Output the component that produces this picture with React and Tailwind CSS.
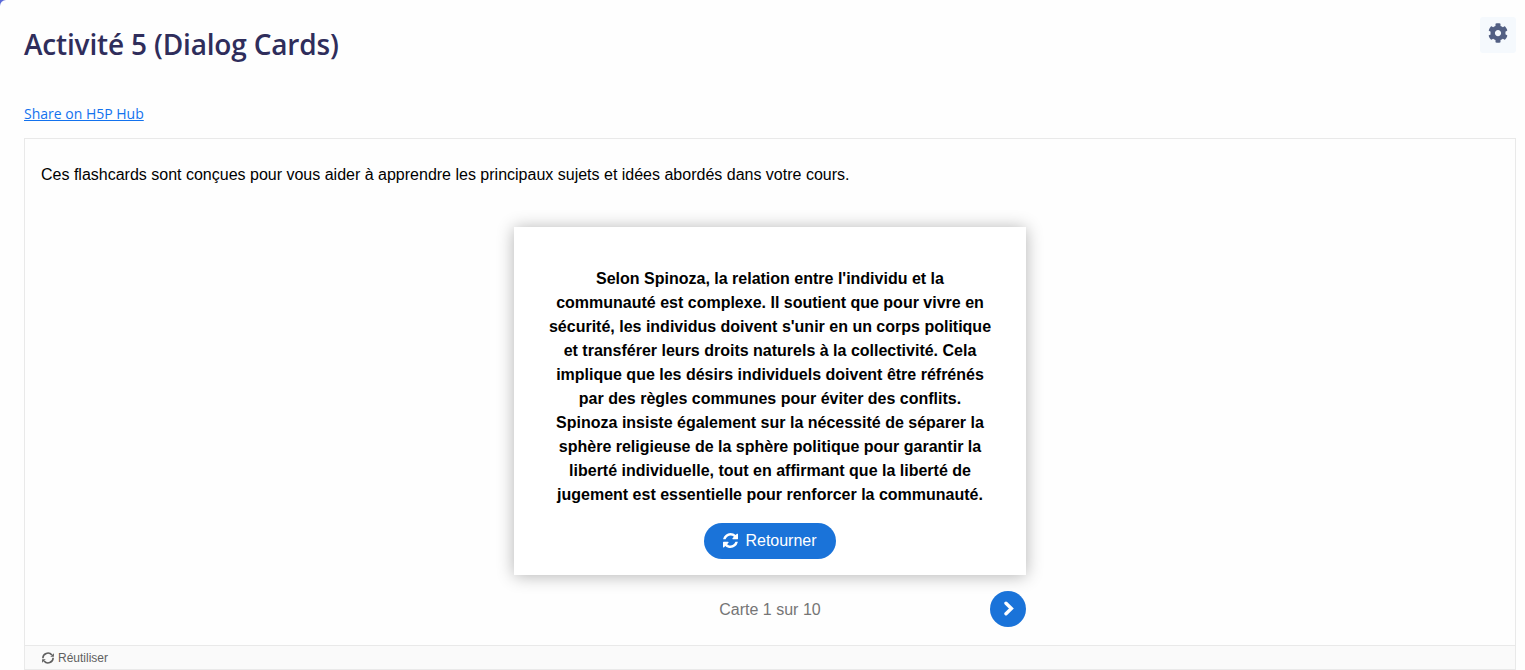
import React from "react";
import { FaCog } from "react-icons/fa";

function RefreshIcon({ className }) {
  return (
    <svg viewBox="0 0 1536 1536" fill="currentColor" className={className} aria-hidden="true">
      <path d="M1511 928q0 5-1 7-64 268-268 434.500t-478 166.500q-146 0-282.500-55t-243.500-157l-129 129q-19 19-45 19t-45-19-19-45v-448q0-26 19-45t45-19h448q26 0 45 19t19 45-19 45l-137 137q71 66 161 102t187 36q134 0 250-65t186-179q11-17 53-117 8-23 30-23h192q13 0 22.500 9.500t9.500 22.500zm25-800v448q0 26-19 45t-45 19h-448q-26 0-45-19t-19-45 19-45l138-138q-148-137-349-137-134 0-250 65t-186 179q-11 17-53 117-8 23-30 23h-199q-13 0-22.500-9.500t-9.500-22.500v-7q65-268 270-434.500t480-166.500q146 0 284 55.500t245 156.500l130-129q19-19 45-19t45 19 19 45z" />
    </svg>
  );
}

function ReuseIcon({ className }) {
  return (
    <svg viewBox="0 0 12 12" fill="none" stroke="currentColor" strokeWidth="1.600" className={className} aria-hidden="true">
      <path d="M.9 6.300A5 5 0 0 1 9.900 3.100M11.100 5.700A5 5 0 0 1 2.100 8.900" />
      <path d="M11.900 1.200v3.600H8.300zM.1 10.800V7.200h3.600z" fill="currentColor" stroke="none" />
    </svg>
  );
}

const lines = [
  "Selon Spinoza, la relation entre l'individu et la",
  "communauté est complexe. Il soutient que pour vivre en",
  "sécurité, les individus doivent s'unir en un corps politique",
  "et transférer leurs droits naturels à la collectivité. Cela",
  "implique que les désirs individuels doivent être réfrénés",
  "par des règles communes pour éviter des conflits.",
  "Spinoza insiste également sur la nécessité de séparer la",
  "sphère religieuse de la sphère politique pour garantir la",
  "liberté individuelle, tout en affirmant que la liberté de",
  "jugement est essentielle pour renforcer la communauté.",
];

export default function App() {
  return (
    <div className="h-[670px] overflow-hidden bg-[#5b6ad8]">
      <main className="h-full rounded-tl-[6px] bg-[#fefefe] pl-6 pr-[9px] pt-[17px] font-['Open_Sans',sans-serif]">
        <header className="flex h-[85px] items-start justify-between">
          <h1 className="pt-[9px] text-[28px] font-semibold leading-9 tracking-[-0.17px] text-[#2f2d5b]">Activité 5 (Dialog Cards)</h1>
          <button aria-label="Paramètres" className="flex size-9 items-center justify-center rounded-[3px] bg-[#f5f9fd] pb-1 text-[#525f83]">
            <FaCog size={20} />
          </button>
        </header>
        <div className="h-9 text-sm leading-6">
          <a href="#" className="text-[#1372ee] underline">Share on H5P Hub</a>
        </div>
        <section className="flex h-[532px] flex-col border border-[#e9e9e9] font-['Liberation_Sans',sans-serif]">
          <div className="flex flex-1 flex-col px-4 pt-6">
            <p className="text-base leading-6 text-black">Ces flashcards sont conçues pour vous aider à apprendre les principaux sujets et idées abordés dans votre cours.</p>
            <div className="mx-auto mt-10 w-[512px]">
              <article className="flex h-[348px] flex-col items-center bg-white pt-10 shadow-[0_1px_16px_rgba(0,0,0,0.3)]">
                <p className="text-center text-base font-bold leading-6 text-black">
                  {lines.map((line) => (
                    <span key={line} className="block whitespace-nowrap">{line}</span>
                  ))}
                </p>
                <button className="mt-4 flex h-9 w-[132px] items-center justify-center gap-[7px] rounded-full bg-[#1a73d9] text-base text-white">
                  <RefreshIcon className="mb-px size-[15px]" />
                  <span>Retourner</span>
                </button>
              </article>
              <nav className="mt-4 grid h-9 grid-cols-[36px_1fr_36px] items-center">
                <span className="col-start-2 pt-0.5 text-center text-base text-[#757575]">Carte 1 sur 10</span>
                <button aria-label="Carte suivante" className="flex size-9 items-center justify-center rounded-full bg-[#1a73d9] text-white">
                  <svg viewBox="0 0 16 16" className="size-4" fill="none" stroke="currentColor" strokeWidth="3.400" aria-hidden="true">
                    <path d="M6 2.200L11.400 7.500 6 12.800" strokeLinecap="round" />
                  </svg>
                </button>
              </nav>
            </div>
          </div>
          <footer className="flex h-6 shrink-0 items-center gap-1 border-t border-[#e9e9e9] bg-[#fafafa] px-[17px] pt-px text-xs text-[#606060]">
            <ReuseIcon className="size-3" />
            <span>Réutiliser</span>
          </footer>
        </section>
      </main>
    </div>
  );
}
